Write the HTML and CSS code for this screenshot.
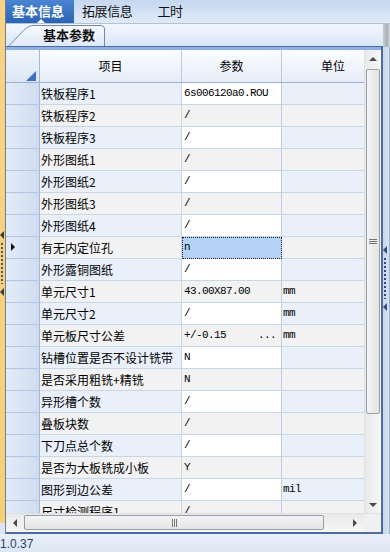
FILE: index.html
```html
<!DOCTYPE html>
<html lang="zh-CN">
<head>
    <meta charset="UTF-8">
    <meta name="viewport" content="width=device-width, initial-scale=1.0">
    <title>基本信息</title>
    <link rel="stylesheet" href="styles.css">
</head>
<body>
    <div class="window">
        <div class="main">
            <!-- left collapsed splitter -->
            <div class="left-strip">
                <span class="split-arrow"></span>
                <span class="split-dots"></span>
                <span class="split-arrow"></span>
            </div>

            <div class="content">
                <div class="tabbar">
                    <div class="tab active">基本信息</div>
                    <div class="tab">拓展信息</div>
                    <div class="tab">工时</div>
                </div>

                <div class="body">
                    <div class="pane">
                        <div class="subtabs">
                            <div class="subtab">
                                <svg class="subtab-shape" width="98" height="21" viewBox="0 0 98 21">
                                    <defs>
                                        <linearGradient id="subtabFill" x1="0" y1="0" x2="0" y2="1">
                                            <stop offset="0" stop-color="#f7faff"/>
                                            <stop offset="1" stop-color="#dfe9f7"/>
                                        </linearGradient>
                                    </defs>
                                    <path d="M0.5 21 C8 14 14 6 20 2 Q22 0.5 25 0.5 L93 0.5 Q96.5 0.5 96.5 4 L96.5 21" fill="url(#subtabFill)" stroke="#7089ad"/>
                                </svg>
                                <span class="subtab-text">基本参数</span>
                            </div>
                        </div>

                        <div class="grid-frame">
                            <div class="grid-top">
                                <div class="cells">
                                    <div class="head">
                                        <div class="hc ind-head"><span class="corner-tri"></span></div>
                                        <div class="hc name">项目</div>
                                        <div class="hc val">参数</div>
                                        <div class="hc unit">单位</div>
                                    </div>
                                    <div class="rows">
                                        <div class="row odd"><div class="ind"></div><div class="name">铁板程序1</div><div class="val mono">6s006120a0.ROU</div><div class="unit"></div></div>
                                        <div class="row even"><div class="ind"></div><div class="name">铁板程序2</div><div class="val mono">/</div><div class="unit"></div></div>
                                        <div class="row odd"><div class="ind"></div><div class="name">铁板程序3</div><div class="val mono">/</div><div class="unit"></div></div>
                                        <div class="row even"><div class="ind"></div><div class="name">外形图纸1</div><div class="val mono">/</div><div class="unit"></div></div>
                                        <div class="row odd"><div class="ind"></div><div class="name">外形图纸2</div><div class="val mono">/</div><div class="unit"></div></div>
                                        <div class="row even"><div class="ind"></div><div class="name">外形图纸3</div><div class="val mono">/</div><div class="unit"></div></div>
                                        <div class="row odd"><div class="ind"></div><div class="name">外形图纸4</div><div class="val mono">/</div><div class="unit"></div></div>
                                        <div class="row even current"><div class="ind"><span class="row-arrow"></span></div><div class="name">有无内定位孔</div><div class="val mono selected">n</div><div class="unit"></div></div>
                                        <div class="row odd"><div class="ind"></div><div class="name">外形露铜图纸</div><div class="val mono">/</div><div class="unit"></div></div>
                                        <div class="row even"><div class="ind"></div><div class="name">单元尺寸1</div><div class="val mono">43.00X87.00</div><div class="unit mono">mm</div></div>
                                        <div class="row odd"><div class="ind"></div><div class="name">单元尺寸2</div><div class="val mono">/</div><div class="unit mono">mm</div></div>
                                        <div class="row even"><div class="ind"></div><div class="name">单元板尺寸公差</div><div class="val mono split"><span>+/-0.15</span><span>...</span></div><div class="unit mono">mm</div></div>
                                        <div class="row odd"><div class="ind"></div><div class="name">钻槽位置是否不设计铣带</div><div class="val mono">N</div><div class="unit"></div></div>
                                        <div class="row even"><div class="ind"></div><div class="name">是否采用粗铣+精铣</div><div class="val mono">N</div><div class="unit"></div></div>
                                        <div class="row odd"><div class="ind"></div><div class="name">异形槽个数</div><div class="val mono">/</div><div class="unit"></div></div>
                                        <div class="row even"><div class="ind"></div><div class="name">叠板块数</div><div class="val mono">/</div><div class="unit"></div></div>
                                        <div class="row odd"><div class="ind"></div><div class="name">下刀点总个数</div><div class="val mono">/</div><div class="unit"></div></div>
                                        <div class="row even"><div class="ind"></div><div class="name">是否为大板铣成小板</div><div class="val mono">Y</div><div class="unit"></div></div>
                                        <div class="row odd"><div class="ind"></div><div class="name">图形到边公差</div><div class="val mono">/</div><div class="unit mono">mil</div></div>
                                        <div class="row even"><div class="ind"></div><div class="name">尺寸检测程序1</div><div class="val mono">/</div><div class="unit"></div></div>
                                    </div>
                                </div>

                                <div class="vscroll">
                                    <div class="sb-btn"><span class="arr-up"></span></div>
                                    <div class="vthumb"><span class="grip-h"></span></div>
                                    <div class="vtrack"></div>
                                    <div class="sb-btn"><span class="arr-down"></span></div>
                                </div>
                            </div>

                            <div class="hscroll-row">
                                <div class="hscroll">
                                    <div class="sb-btn-h"><span class="arr-left"></span></div>
                                    <div class="hthumb"><span class="grip-v"></span></div>
                                    <div class="htrack"></div>
                                    <div class="sb-btn-h"><span class="arr-right"></span></div>
                                </div>
                                <div class="sb-corner"></div>
                            </div>
                        </div>
                    </div>

                    <!-- right collapsed splitter -->
                    <div class="right-strip">
                        <div class="right-top"></div>
                        <div class="right-handle">
                            <span class="split-arrow dark"></span>
                            <span class="split-dots dark"></span>
                            <span class="split-arrow dark"></span>
                        </div>
                    </div>
                </div>
            </div>
        </div>

        <div class="status">1.0.37</div>
    </div>
</body>
</html>
```

FILE: styles.css
```css
* {
    box-sizing: border-box;
    margin: 0;
    padding: 0;
}

body {
    width: 390px;
    height: 552px;
    overflow: hidden;
    background: #dfe8f4;
    font-family: "Noto Sans CJK SC", "Liberation Sans", sans-serif;
    font-size: 12px;
    color: #000;
}

.window {
    display: flex;
    flex-direction: column;
    height: 552px;
}

.main {
    display: flex;
    height: 534px;
    flex-shrink: 0;
    overflow: hidden;
}

/* left splitter strip */
.left-strip {
    width: 6px;
    flex-shrink: 0;
    border-right: 1px solid #6c7f97;
    background: linear-gradient(to bottom, #f8d483 0, #f6cf78 523px, #dce6f3 523px);
    display: flex;
    flex-direction: column;
    align-items: flex-start;
    padding-top: 231px;
}

.split-arrow {
    width: 0;
    height: 0;
    border-top: 4px solid transparent;
    border-bottom: 4px solid transparent;
    border-right: 4px solid #3b3b3b;
}

.split-dots {
    width: 2px;
    height: 41px;
    margin: 4px 0 4px 1px;
    background: repeating-linear-gradient(to bottom, #555 0, #555 2px, transparent 2px, transparent 4px);
}

.content {
    flex: 1;
    min-height: 0;
    display: flex;
    flex-direction: column;
}

/* top tabs */
.tabbar {
    height: 24px;
    flex-shrink: 0;
    display: flex;
    align-items: flex-start;
    background: linear-gradient(to bottom, #c5d8f0, #e0eaf7);
    border-bottom: 1px solid #b4c2d3;
}

.tab {
    height: 23px;
    line-height: 22px;
    font-size: 13px;
    padding: 0 9px 0 0;
    margin-left: 8px;
    color: #111;
    letter-spacing: -0.4px;
}

.tab.active {
    position: relative;
    margin-left: 0;
    width: 68px;
    padding-left: 6px;
    font-weight: bold;
    color: #fff;
    letter-spacing: 0;
    background: linear-gradient(to bottom, #4a84d2, #2c62b4);
}

.tab.active::after {
    content: "";
    position: absolute;
    left: 31px;
    bottom: 0;
    border-left: 4px solid transparent;
    border-right: 4px solid transparent;
    border-bottom: 4px solid #fff;
}

.tab + .tab {
    margin-left: 8px;
}

.tab:nth-child(3) {
    margin-left: 16px;
}

.body {
    flex: 1;
    min-height: 0;
    display: flex;
}

.pane {
    flex: 1;
    min-height: 0;
    display: flex;
    flex-direction: column;
}

/* sub tab */
.subtabs {
    height: 22px;
    flex-shrink: 0;
    padding: 1px 0 0 2px;
    background: linear-gradient(to bottom, #f2f7fe, #d9e6f7);
}

.subtab {
    position: relative;
    width: 98px;
    height: 21px;
}

.subtab-shape {
    position: absolute;
    left: 0;
    top: 0;
}

.subtab-text {
    position: relative;
    display: block;
    padding-left: 35px;
    line-height: 20px;
    font-size: 13px;
    font-weight: bold;
    color: #111;
}

/* grid */
.grid-frame {
    flex: 1;
    min-height: 0;
    display: flex;
    flex-direction: column;
    border-top: 1px solid #4e6ea3;
    border-right: 2px solid #4c6b9e;
    border-bottom: 2px solid #4c6b9e;
    background: #fff;
}

.grid-top {
    flex: 1;
    min-height: 0;
    display: flex;
    border-top: 3px solid #8fb0e2;
    overflow: hidden;
}

.cells {
    flex: 1;
    overflow: hidden;
}

.head {
    display: flex;
    height: 33px;
    border-bottom: 1px solid #9db2d0;
    background: linear-gradient(to bottom, #fbfdff, #e6edf7);
}

.hc {
    line-height: 32px;
    text-align: center;
    border-right: 1px solid #b9c9e0;
    font-size: 12px;
}

.ind-head {
    position: relative;
    background: linear-gradient(to bottom, #f0f5fc, #dce7f5);
    border-right-color: #a3b8d8;
}

.corner-tri {
    position: absolute;
    right: 3px;
    bottom: 1px;
    width: 0;
    height: 0;
    border-left: 10px solid transparent;
    border-bottom: 10px solid #3d6fc2;
}

.ind, .ind-head {
    width: 34px;
    flex-shrink: 0;
}

.name {
    width: 142px;
    flex-shrink: 0;
}

.val {
    width: 100px;
    flex-shrink: 0;
}

.unit {
    flex: 1;
}

.hc.unit {
    border-right: none;
    padding-left: 20px;
}

.rows {
    display: flex;
    flex-direction: column;
}

.row {
    display: flex;
    height: 22px;
    flex-shrink: 0;
}

.row > div {
    border-bottom: 1px solid #c8d6ea;
    line-height: 21px;
    white-space: nowrap;
    overflow: hidden;
}

.row .ind {
    background: linear-gradient(to right, #e2ebf8, #cfdcf0);
    border-bottom-color: #b2c5e1;
    border-right: 1px solid #a3b8d8;
    position: relative;
}

.row .name {
    padding-left: 1px;
    border-right: 1px solid #c6d5ea;
}

.row .val {
    padding-left: 2px;
    border-right: 1px solid #bccde7;
}

.row .unit {
    padding-left: 1px;
}

.row.odd .name,
.row.odd .unit {
    background: #e9f0fa;
}

.row.odd .val {
    background: #fff;
}

.row.even .name,
.row.even .val,
.row.even .unit {
    background: #f2f2f2;
}

.mono {
    font-family: "Liberation Mono", "DejaVu Sans Mono", monospace;
    font-size: 11px;
    letter-spacing: -0.6px;
}

.row .val.selected {
    background: #b5d3f6;
    outline: 1px dotted #222;
    outline-offset: -1px;
}

.val.split {
    display: flex;
    justify-content: space-between;
    padding-right: 5px;
}

.row-arrow {
    position: absolute;
    left: 5px;
    top: 6px;
    border-top: 4px solid transparent;
    border-bottom: 4px solid transparent;
    border-left: 4px solid #111;
}

/* scrollbars */
.vscroll {
    width: 17px;
    flex-shrink: 0;
    display: flex;
    flex-direction: column;
    background: linear-gradient(to right, #e9e9e9, #f7f7f7);
    border-left: 1px solid #e0e0e0;
}

.sb-btn {
    height: 17px;
    flex-shrink: 0;
    display: flex;
    align-items: center;
    justify-content: center;
}

.arr-up {
    border-left: 4px solid transparent;
    border-right: 4px solid transparent;
    border-bottom: 4px solid #4a4a4a;
}

.arr-down {
    border-left: 4px solid transparent;
    border-right: 4px solid transparent;
    border-top: 4px solid #4a4a4a;
}

.vthumb {
    height: 345px;
    flex-shrink: 0;
    margin: 2px 1px 0 1px;
    border: 1px solid #959fab;
    border-radius: 2px;
    background: linear-gradient(to right, #f4f4f4, #e4e4e4);
    display: flex;
    align-items: center;
    justify-content: center;
}

.grip-h {
    width: 8px;
    height: 5px;
    border-top: 1px solid #777;
    border-bottom: 1px solid #777;
    position: relative;
}

.grip-h::after {
    content: "";
    position: absolute;
    left: 0;
    right: 0;
    top: 1px;
    border-top: 1px solid #777;
}

.vtrack {
    flex: 1;
}

.hscroll-row {
    height: 19px;
    display: flex;
    flex-shrink: 0;
}

.hscroll {
    flex: 1;
    display: flex;
    align-items: stretch;
    background: linear-gradient(to bottom, #e9e9e9, #f7f7f7);
    border-top: 1px solid #e0e0e0;
}

.sb-btn-h {
    width: 18px;
    display: flex;
    align-items: center;
    justify-content: center;
}

.arr-left {
    border-top: 4px solid transparent;
    border-bottom: 4px solid transparent;
    border-right: 4px solid #4a4a4a;
}

.arr-right {
    border-top: 4px solid transparent;
    border-bottom: 4px solid transparent;
    border-left: 4px solid #4a4a4a;
}

.hthumb {
    width: 300px;
    margin: 1px 0 2px;
    border: 1px solid #959fab;
    border-radius: 2px;
    background: linear-gradient(to bottom, #f4f4f4, #e4e4e4);
    display: flex;
    align-items: center;
    justify-content: center;
}

.grip-v {
    width: 5px;
    height: 8px;
    border-left: 1px solid #777;
    border-right: 1px solid #777;
    position: relative;
}

.grip-v::after {
    content: "";
    position: absolute;
    top: 0;
    bottom: 0;
    left: 1px;
    border-left: 1px solid #777;
}

.htrack {
    flex: 1;
}

.sb-corner {
    width: 17px;
    background: #f0f0f0;
    border-top: 1px solid #e0e0e0;
}

/* right splitter strip */
.right-strip {
    width: 7px;
    flex-shrink: 0;
    display: flex;
    flex-direction: column;
}

.right-top {
    height: 23px;
    flex-shrink: 0;
    background: linear-gradient(to right, #c9ccd1, #a9aeb5 60%, #d7dde6);
}

.right-handle {
    flex: 1;
    background: linear-gradient(to right, #c9d7ec, #d6e1f1);
    border-right: 1px solid #9eb1cd;
    display: flex;
    flex-direction: column;
    align-items: flex-start;
    padding-top: 199px;
}

.split-arrow.dark {
    border-right-color: #2e4f86;
}

.split-dots.dark {
    background: repeating-linear-gradient(to bottom, #2e4f86 0, #2e4f86 2px, transparent 2px, transparent 4px);
}

/* status bar */
.status {
    height: 18px;
    flex-shrink: 0;
    padding-top: 3px;
    line-height: 14px;
    font-family: "Liberation Sans", "Noto Sans", sans-serif;
    font-size: 12px;
    color: #2a4468;
    background: linear-gradient(to bottom, #e9eff8, #dce6f3);
}
```
